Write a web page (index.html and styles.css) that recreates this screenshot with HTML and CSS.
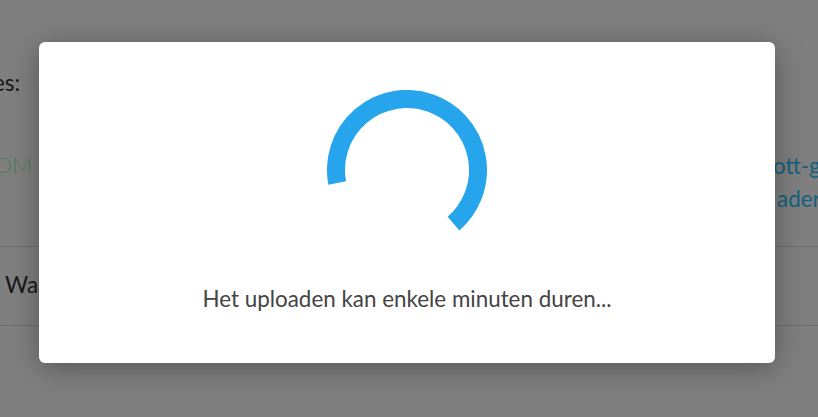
FILE: index.html
```html
<!DOCTYPE html>
<html lang="nl">
<head>
    <meta charset="UTF-8">
    <meta name="viewport" content="width=device-width, initial-scale=1.0">
    <title>Uploaden</title>
    <link rel="stylesheet" href="styles.css">
</head>
<body>
    <!-- Page behind the modal -->
    <div class="page">
        <p class="intro">es:</p>
        <div class="file-row">
            <span class="file-type">DM</span>
            <div class="file-links">
                <a href="#">ott-g</a>
                <a href="#" class="file-link-second">aders</a>
            </div>
        </div>
        <div class="name-row">Waa</div>
    </div>

    <!-- Upload modal -->
    <div class="overlay">
        <div class="modal">
            <svg class="spinner" viewBox="0 0 160 160" width="160" height="160">
                <path d="M10.2 93 A71 71 0 1 1 126.5 133.6" fill="none" stroke="#27a5ec" stroke-width="18"/>
            </svg>
            <p class="modal-text">Het uploaden kan enkele minuten duren...</p>
        </div>
    </div>
</body>
</html>
```

FILE: styles.css
```css
* {
    margin: 0;
    padding: 0;
    box-sizing: border-box;
}

body {
    font-family: 'Lato', sans-serif;
    background: #fff;
    height: 100vh;
    overflow: hidden;
    position: relative;
}

/* Page behind the modal */
.page {
    padding-top: 69px;
    color: #333;
    font-size: 22.4px;
}

.intro {
    line-height: 28px;
    height: 60px;
    margin-left: -7px;
}

.file-row {
    display: flex;
    height: 118px;
    padding-top: 22px;
    border-bottom: 1px solid #ddd;
    white-space: nowrap;
}

.file-type {
    flex: none;
    width: 773px;
    line-height: 28px;
    margin-left: -5px;
    color: #9cf5c0;
    font-weight: 300;
}

.file-links {
    flex: none;
    display: flex;
    flex-direction: column;
    line-height: 33px;
    margin-left: 5px;
    margin-top: -2px;
}

.file-links a {
    color: #2cc4ff;
    text-decoration: none;
}

.file-links .file-link-second {
    margin-left: 4px;
}

.name-row {
    height: 79px;
    padding: 24px 0 0 5px;
    line-height: 28px;
    border-bottom: 1px solid #ddd;
}

/* Upload modal */
.overlay {
    position: absolute;
    top: 0;
    left: 0;
    width: 100%;
    height: 100%;
    background: rgba(0, 0, 0, 0.5);
}

.modal {
    width: 736px;
    height: 321px;
    margin: 42px 0 0 39px;
    padding-top: 48px;
    background: #fff;
    border-radius: 6px;
    box-shadow: 0 5px 30px rgba(0, 0, 0, 0.33);
    display: flex;
    flex-direction: column;
    align-items: center;
}

.spinner {
    display: block;
}

.modal-text {
    margin-top: 35px;
    font-size: 22.4px;
    line-height: 28px;
    color: #444;
}
```
